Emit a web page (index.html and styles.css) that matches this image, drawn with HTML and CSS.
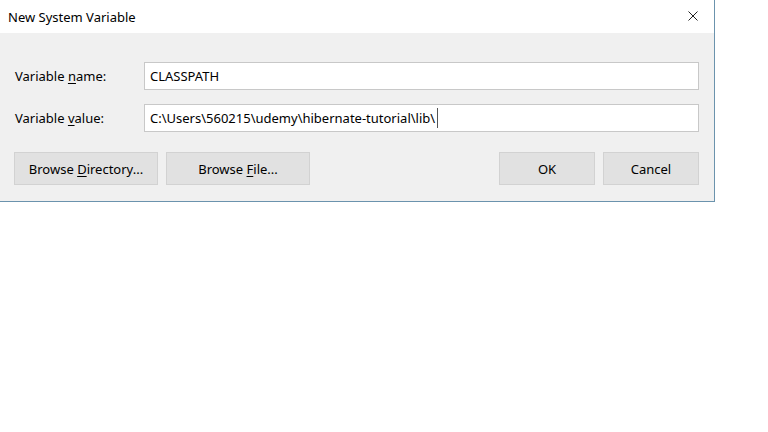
FILE: index.html
```html
<!DOCTYPE html>
<html>
<head>
<meta charset="utf-8">
<link rel="stylesheet" href="styles.css">
</head>
<body>
<div class="window">
  <div class="titlebar">
    <span class="title">New System Variable</span>
    <svg class="close" width="10" height="10" viewBox="0 0 10 10"><path d="M0.5 0.5L9.5 9.5M9.5 0.5L0.5 9.5" stroke="#222" stroke-width="1"/></svg>
  </div>
  <div class="body">
    <div class="row">
      <label class="label">Variable <u>n</u>ame:</label>
      <div class="input"><span>CLASSPATH</span></div>
    </div>
    <div class="row row2">
      <label class="label">Variable <u>v</u>alue:</label>
      <div class="input"><span>C:\Users\560215\udemy\hibernate-tutorial\lib\</span><span class="caret"></span></div>
    </div>
    <div class="buttons">
      <div class="left">
        <div class="btn wide"><span>Browse <u>D</u>irectory...</span></div>
        <div class="btn wide"><span>Browse <u>F</u>ile...</span></div>
      </div>
      <div class="right">
        <div class="btn narrow"><span>OK</span></div>
        <div class="btn narrow"><span>Cancel</span></div>
      </div>
    </div>
  </div>
</div>
</body>
</html>
```
FILE: styles.css
```css
html, body {
  margin: 0;
  padding: 0;
  background: #ffffff;
}
body {
  font-family: "Noto Sans", "Open Sans", sans-serif;
  font-size: 13px;
  color: #000;
}
.window {
  width: 714px;
  height: 201px;
  border-right: 1px solid #6b93ad;
  border-bottom: 1px solid #6b93ad;
  border-left: 1px solid #c9d3da;
  box-sizing: content-box;
  display: flex;
  flex-direction: column;
  margin-left: -1px;
}
.titlebar {
  height: 33px;
  background: #fff;
  display: flex;
  align-items: center;
  justify-content: space-between;
  padding: 0 16px 0 8px;
  flex-shrink: 0;
}
.title {
  font-size: 13px;
  color: #000;
}
.close {
  margin-top: -1px;
}
.body {
  flex: 1;
  background: #f0f0f0;
  padding: 29px 15px 0 15px;
}
.row {
  display: flex;
  align-items: center;
  height: 28px;
}
.row2 {
  margin-top: 14px;
}
.label {
  width: 129px;
  flex-shrink: 0;
}
.label u, .btn u {
  text-decoration-thickness: 1px;
  text-underline-offset: 2px;
}
.input {
  flex: 1;
  height: 28px;
  box-sizing: border-box;
  background: #fff;
  border: 1px solid #c8c8c8;
  padding: 0 5px;
  display: flex;
  align-items: center;
}
.caret {
  display: inline-block;
  width: 1px;
  height: 20px;
  background: #555;
  margin-left: 2px;
}
.buttons {
  display: flex;
  justify-content: space-between;
  margin-top: 20px;
  margin-left: -1px;
}
.left, .right {
  display: flex;
  gap: 8px;
}
.btn {
  height: 33px;
  box-sizing: border-box;
  background: #e1e1e1;
  border: 1px solid #d2d2d2;
  display: flex;
  align-items: center;
  justify-content: center;
}
.wide {
  width: 144px;
}
.narrow {
  width: 96px;
}
```
